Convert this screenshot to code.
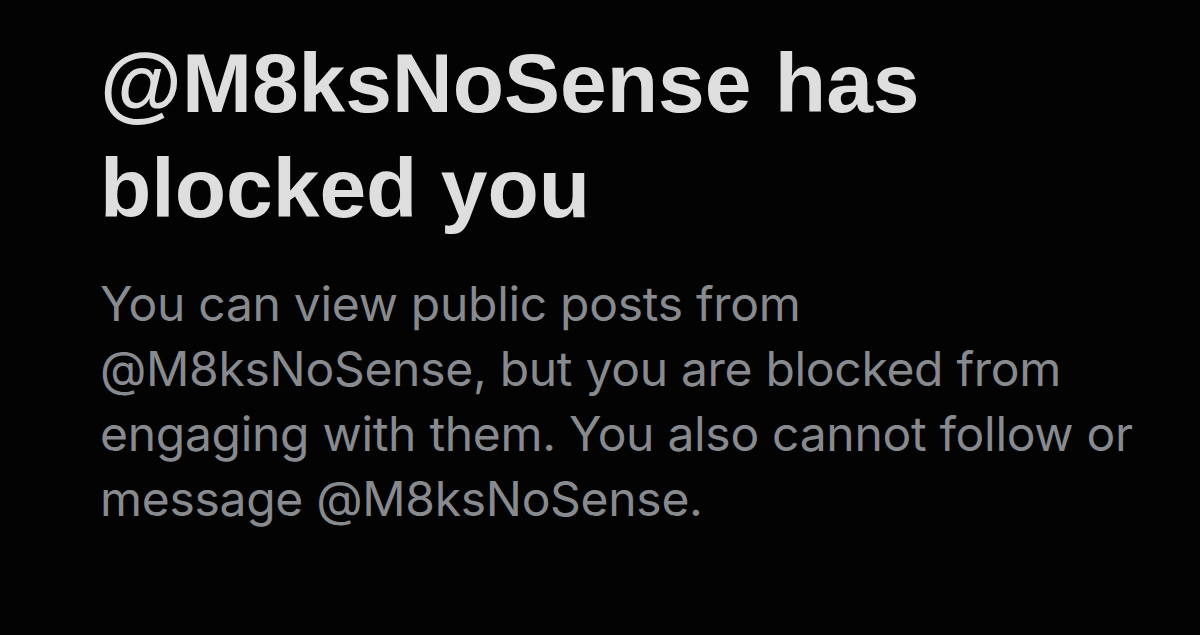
export default function App() {
  return (
    <div className="h-[635px] w-[1200px] overflow-hidden bg-[#030303]">
      <div className="pl-[100px] pt-[31px]">
        <h1 className="whitespace-nowrap font-['Liberation_Sans',Arial,sans-serif] text-[84px] font-bold leading-[105px] text-[#dedede]">
          @M8ksNoSense has
          <br />
          blocked you
        </h1>
        <p className="mt-[30px] whitespace-nowrap font-['Inter',sans-serif] text-[48px] leading-[65px] tracking-[-0.3px] text-[#878a8f]">
          You can view public posts from
          <br />
          @M8ksNoSense, but you are blocked from
          <br />
          engaging with them. You also cannot follow or
          <br />
          message @M8ksNoSense.
        </p>
      </div>
    </div>
  );
}
